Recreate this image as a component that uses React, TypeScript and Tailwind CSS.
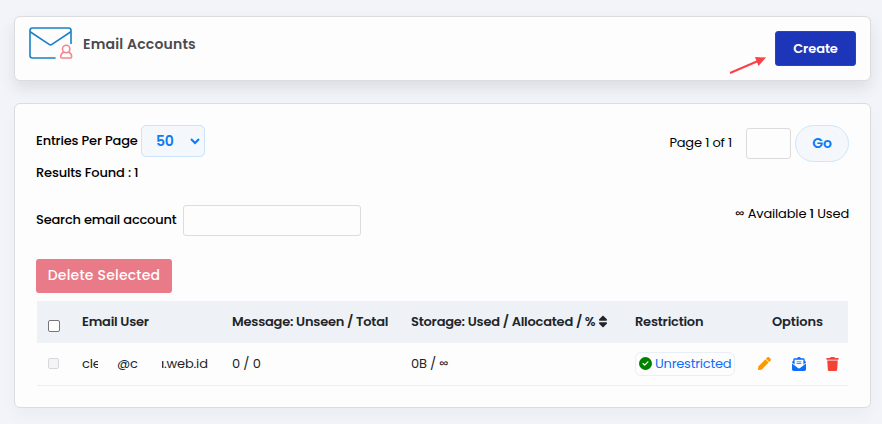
import { useState } from 'react';
import { FaPen, FaTrash } from 'react-icons/fa';
import { FaCircleCheck, FaEnvelopeOpenText, FaSort } from 'react-icons/fa6';

interface EmailAccount {
  id: number;
  unseen: number;
  total: number;
  used: string;
  allocated: string;
  restriction: string;
}

const accounts: EmailAccount[] = [
  { id: 1, unseen: 0, total: 0, used: '0B', allocated: '∞', restriction: 'Unrestricted' },
];

function EmailIcon() {
  return (
    <svg width="45" height="34" viewBox="0 0 45 34" fill="none" strokeLinecap="round" strokeLinejoin="round">
      <path d="M27 32H4.500A2.500 2.500 0 0 1 2 29.500V4.500A2.500 2.500 0 0 1 4.500 2H40.500A2.500 2.500 0 0 1 43 4.500V17.500" stroke="#1b80c4" strokeWidth="1.600" />
      <path d="M2.500 6L21.500 18.600Q22.500 19.200 23.500 18.600L42.500 6" stroke="#1b80c4" strokeWidth="1.600" />
      <circle cx="38.200" cy="23" r="3.700" stroke="#f5858f" strokeWidth="1.500" />
      <path d="M35.800 26C33.600 27 32.700 28.500 32.700 30.800Q32.700 32 33.800 32H42.600Q43.700 32 43.700 30.800C43.700 28.500 42.800 27 40.600 26" stroke="#f5858f" strokeWidth="1.500" />
    </svg>
  );
}

export default function App() {
  const [search, setSearch] = useState('');
  const [page, setPage] = useState('');

  return (
    <div className="h-[424px] w-[882px] overflow-hidden bg-[#f3f4f9] pt-4 pl-3.5 font-['Poppins','Inter','Noto_Sans',sans-serif] text-[13px] leading-5 tracking-[-0.17px] text-black [font-feature-settings:'cv11']">
      <header className="flex h-[65px] w-[857px] justify-between rounded-md border border-[#dcdcde] bg-[#fdfdfd] pr-[14px] pl-[13px] shadow-[0_8px_16px_rgba(0,0,0,0.09)]">
        <div className="flex pt-[9px]">
          <EmailIcon />
          <h1 className="ml-[10px] pt-2 text-sm font-semibold tracking-[0.2px] text-[#4b4b4f]">Email Accounts</h1>
        </div>
        <div className="flex items-start pt-[14px]">
          <svg className="mt-[24px] mr-[8px]" width="38" height="19" viewBox="0 0 38 19">
            <path d="M1 18L29 6" stroke="#fb4148" strokeWidth="2" fill="none" />
            <path d="M26 2L37 2.500L29.500 11Z" fill="#fb4148" />
          </svg>
          <button className="h-[35px] w-[81px] rounded-[3px] border border-[#1a49c4] bg-[#1d35b8] text-[13px] font-semibold tracking-[-0.1px] text-white">
            Create
          </button>
        </div>
      </header>

      <main className="mt-[22px] h-[305px] w-[857px] rounded-md border border-[#dcdcde] bg-[#fdfdfd] px-[22px] pt-[21px] shadow-[0_8px_16px_rgba(0,0,0,0.03)]">
        <div className="-mr-px flex h-[79px] justify-between">
          <div className="-ml-px">
            <label className="flex items-center font-medium">
              <span className="w-[105px] whitespace-nowrap">Entries Per Page</span>
              <span className="flex h-8 w-16 items-center justify-between rounded-[5px] border border-[#c9e4fb] bg-[#f4f7fb] pr-1 pl-3.5 text-sm font-semibold text-[#0d7bf5]">
                50
                <svg width="10" height="7" viewBox="0 0 10 7" fill="none">
                  <path d="M1 1L5 5L9 1" stroke="#0d7bf5" strokeWidth="2" />
                </svg>
              </span>
            </label>
            <p className="mt-1.5 font-medium">Results Found : 1</p>
          </div>
          <div className="flex h-9 items-center">
            <span className="mr-[14px]">Page 1 of 1</span>
            <input
              value={page}
              onChange={e => setPage(e.target.value)}
              className="h-[31px] w-[45px] rounded-[3px] border border-[#dcdcdf] px-1"
            />
            <button className="ml-1 h-[37px] w-[54px] rounded-full border border-[#cde8fa] bg-[#f4f7fb] text-sm font-semibold text-[#0d7bf5]">
              Go
            </button>
          </div>
        </div>

        <div className="-mr-px mt-px flex h-[31px] justify-between">
          <label className="-ml-px flex items-center font-medium">
            <span className="-mt-0.5 w-[147px] tracking-[-0.2px] whitespace-nowrap">Search email account</span>
            <input
              value={search}
              onChange={e => setSearch(e.target.value)}
              className="h-[31px] w-[178px] rounded-[3px] border border-[#dcdcdf] px-2"
            />
          </label>
          <p className="-mt-px">∞ Available <span className="font-medium">1</span> Used</p>
        </div>

        <button className="mt-[23px] -ml-px block h-[34px] w-[136px] rounded-[3px] bg-[#e87b87] pb-0.5 text-sm font-medium tracking-[0.2px] text-white">
          Delete Selected
        </button>

        <table className="mt-2 w-[811px] table-fixed border-collapse text-left text-[#212529]">
          <colgroup>
            <col className="w-[45px]" />
            <col className="w-[150px]" />
            <col className="w-[179px]" />
            <col className="w-[224px]" />
            <col className="w-[112px]" />
            <col className="w-[101px]" />
          </colgroup>
          <thead className="bg-[#eef2f7]">
            <tr className="h-[42px] tracking-[-0.22px] whitespace-nowrap">
              <th className="pt-2 pl-[11px]">
                <span className="block h-3 w-3 rounded-[2px] border border-[#767676] bg-white" />
              </th>
              <th className="font-semibold">Email User</th>
              <th className="font-semibold">Message: Unseen / Total</th>
              <th className="font-semibold">
                Storage: Used / Allocated / % <FaSort className="-mt-0.5 -ml-px inline h-[13px] w-3" />
              </th>
              <th className="font-semibold">Restriction</th>
              <th className="pl-[25px] font-semibold tracking-[-0.1px]">Options</th>
            </tr>
          </thead>
          <tbody>
            {accounts.map(account => (
              <tr key={account.id} className="h-[42px] border-b border-[#eeeeef]">
                <td className="pl-[11px]">
                  <span className="block h-[11px] w-[11px] rounded-[2px] border border-[#d8d8da] bg-[#f4f4f6]" />
                </td>
                <td>
                  {/* parts of the address are masked */}
                  <span className="flex">
                    <span className="w-4">cle</span>
                    <span className="relative h-5 w-[19px] bg-[#fdfdfd]" />
                    <span className="w-[21px]">@c</span>
                    <span className="flex w-[26px] justify-end">a</span>
                    <span className="relative -ml-[26px] h-5 w-[24px] bg-[#fdfdfd]" />
                    <span className="ml-0.5">.web.id</span>
                  </span>
                </td>
                <td>{account.unseen} / {account.total}</td>
                <td>{account.used} / {account.allocated}</td>
                <td>
                  <span className="flex h-6 w-[100px] items-center gap-[3px] rounded-md border border-[#e8eff8] pl-[3px] tracking-[-0.22px] text-[#0d6efd]">
                    <FaCircleCheck className="h-[13px] w-[13px] shrink-0 text-[#008000]" />
                    {account.restriction}
                  </span>
                </td>
                <td>
                  <span className="flex items-center pl-[11px]">
                    <FaPen className="h-[13px] w-[13px] text-[#ff9800]" />
                    <FaEnvelopeOpenText className="ml-[21px] h-[14px] w-[14px] text-[#0d6efd]" />
                    <FaTrash className="ml-5 h-[14px] w-[13px] text-[#f44336]" />
                  </span>
                </td>
              </tr>
            ))}
          </tbody>
        </table>
      </main>
    </div>
  );
}
